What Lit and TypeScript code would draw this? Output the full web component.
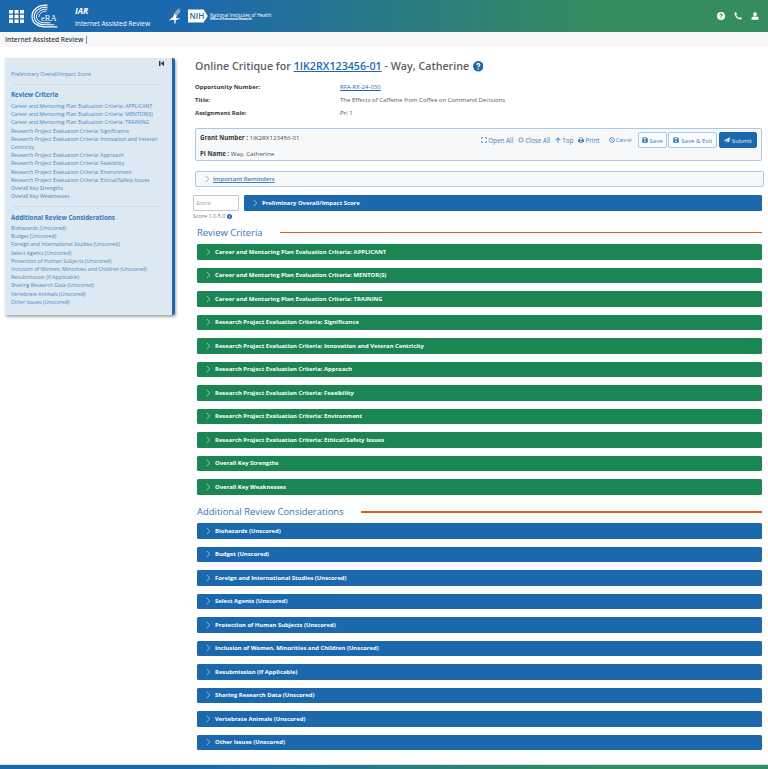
import { LitElement, html, css, svg } from 'lit';
import { customElement } from 'lit/decorators.js';

const CRITERIA = [
  'Career and Mentoring Plan Evaluation Criteria: APPLICANT',
  'Career and Mentoring Plan Evaluation Criteria: MENTOR(S)',
  'Career and Mentoring Plan Evaluation Criteria: TRAINING',
  'Research Project Evaluation Criteria: Significance',
  'Research Project Evaluation Criteria: Innovation and Veteran Centricity',
  'Research Project Evaluation Criteria: Approach',
  'Research Project Evaluation Criteria: Feasibility',
  'Research Project Evaluation Criteria: Environment',
  'Research Project Evaluation Criteria: Ethical/Safety Issues',
  'Overall Key Strengths',
  'Overall Key Weaknesses',
];

const CONSIDERATIONS = [
  'Biohazards (Unscored)',
  'Budget (Unscored)',
  'Foreign and International Studies (Unscored)',
  'Select Agents (Unscored)',
  'Protection of Human Subjects (Unscored)',
  'Inclusion of Women, Minorities and Children (Unscored)',
  'Resubmission (If Applicable)',
  'Sharing Research Data (Unscored)',
  'Vertebrate Animals (Unscored)',
  'Other Issues (Unscored)',
];

const chevron = html`<svg class="chev" viewBox="0 0 6 10"><path d="M1 .8 5 5 1 9.2" fill="none" stroke="currentColor" stroke-width=".7"/></svg>`;

const saveIcon = html`<svg class="ico" viewBox="0 0 16 16"><path fill="currentColor" fill-rule="evenodd" d="M2 1h10l3 3v10a1 1 0 0 1-1 1H2a1 1 0 0 1-1-1V2a1 1 0 0 1 1-1Zm1.500 2v3.500h8V3ZM8 8.500a2.500 2.500 0 1 0 0 5 2.500 2.500 0 0 0 0-5Z"/></svg>`;

const questionGlyph = svg`<path fill="currentColor" fill-rule="evenodd" d="M8 0a8 8 0 1 1 0 16A8 8 0 0 1 8 0Zm.2 3C6.300 3 5 4 4.800 5.700l2 .3c.1-.8.500-1.200 1.300-1.200.7 0 1.200.4 1.200 1 0 .5-.3.8-1 1.200-.9.500-1.300 1.100-1.300 2.200v.4h2V9.300c0-.4.200-.6.800-1 1-.6 1.500-1.300 1.500-2.400C11.300 4.200 10 3 8.200 3ZM7 11v2h2v-2Z"/>`;

@customElement('app-root')
export class AppRoot extends LitElement {
  static styles = css`
    :host {
      display: block;
      font-family: 'Open Sans', 'Noto Sans', sans-serif;
      color: #4a4f55;
      background: #fff;
    }
    * { box-sizing: border-box; }
    a { color: #1d69ad; }
    .page { height: 769px; display: flex; flex-direction: column; overflow: hidden; }

    .top {
      height: 32px;
      flex: none;
      display: flex;
      align-items: center;
      color: #fff;
      background: linear-gradient(90deg, #1c68ad 0%, #1c68ad 25%, #358c5e 78%, #358c5e 100%);
    }
    .grid-ico { width: 15px; height: 13px; margin-left: 9px; flex: none; }
    .era { width: 27px; height: 24px; margin-left: 7px; flex: none; }
    .app-name { margin-left: 17px; width: 77px; flex: none; display: flex; flex-direction: column; gap: 3px; padding-top: 1px; }
    .app-name b { font-size: 8.500px; font-style: italic; line-height: 10px; }
    .app-name span { font-size: 6.600px; line-height: 9px; white-space: nowrap; }
    .hhs { width: 13px; height: 16px; margin-left: 16px; flex: none; }
    .nih { width: 20px; height: 14px; margin-left: 7px; flex: none; }
    .nih-txt { margin-left: 2px; display: flex; flex-direction: column; gap: .5px; font-size: 4.700px; line-height: 5px; padding-top: 2px; }
    .nih-txt small { font-size: 2.800px; line-height: 3.500px; font-weight: 700; }
    .top-right { margin-left: auto; margin-right: 9.500px; display: flex; align-items: center; gap: 9px; }
    .top-right svg { width: 8px; height: 8px; display: block; }

    .sub {
      height: 15px;
      flex: none;
      background: #f6f7f9;
      display: flex;
      align-items: center;
      padding-left: 5px;
      font-size: 6.600px;
      font-weight: 600;
      color: #3c4045;
    }
    .sub i { width: .6px; height: 8px; background: #8a8a8a; margin-left: 3px; }

    .content { display: flex; align-items: flex-start; flex: 1; }

    .side {
      position: relative;
      margin: 11px 0 0 5px;
      width: 170px;
      flex: none;
      height: 257px;
      padding: 9px 4px 0 6px;
      background: #dce9f3;
      border-right: 3px solid #1c68ad;
      border-radius: 1px 2px 2px 1px;
      box-shadow: 1px 2px 3px rgba(0, 0, 0, .35);
      font-size: 5.230px;
      line-height: 8.200px;
      color: #4a88c0;
    }
    .side .pin { position: absolute; top: 3px; right: 8px; width: 5px; height: 5px; color: #333; }
    .side hr { border: 0; height: 1px; background: #d0dae3; margin: 6px 7px 5.200px 2px; }
    .side h4 { margin: 0 0 2.500px; font-size: 6.200px; line-height: 9px; font-weight: 700; color: #2f76b5; }

    .main { margin-left: 20px; width: 567px; flex: none; padding-top: 11px; }
    h1 {
      margin: 0;
      font-size: 10.700px;
      line-height: 17px;
      font-weight: 600;
      color: #5b6066;
      display: flex;
      align-items: center;
      white-space: pre;
    }
    h1 svg { width: 10.500px; height: 10.500px; color: #1c68ad; margin-left: 1px; }
    .meta {
      margin-top: 5.500px;
      display: grid;
      grid-template-columns: 145px 1fr;
      grid-auto-rows: 13px;
      align-items: center;
      font-size: 6px;
      color: #555;
    }
    .meta b { color: #33373b; font-weight: 700; }

    .grant {
      margin-top: 8.500px;
      height: 33px;
      border: 1px solid #a9c9e6;
      border-radius: 2px;
      background: #f6f8fa;
      display: flex;
      justify-content: space-between;
      padding: 3px 4px 0 4px;
      font-size: 6.150px;
    }
    .grant-info { display: flex; flex-direction: column; gap: 8px; line-height: 8px; padding-top: 1.500px; }
    .grant-info b { color: #33373b; }
    .tools { display: flex; align-items: center; height: 16px; color: #3f7fb9; font-size: 6.100px; }
    .tool { display: flex; align-items: center; gap: 1.500px; margin-right: 4.500px; white-space: nowrap; font-size: 6.350px; }
    .tool.cancel { font-size: 5px; margin-left: 4.500px; margin-right: 6px; }
    .ico { width: 6px; height: 6px; display: block; flex: none; }
    .btn {
      height: 16px;
      display: flex;
      align-items: center;
      gap: 2px;
      padding: 0 4px;
      margin-right: 1.500px;
      border: .7px solid #a9c9e6;
      border-radius: 2px;
      color: #3f7fb9;
      background: #f9fbfc;
      white-space: nowrap;
    }
    .btn.save { padding: 0 3px; }
    .btn .ico { color: #1c68ad; }
    .btn.primary { margin-right: 0; background: #1c68ad; border-color: #1c68ad; color: #e8f1f8; }
    .btn.primary .ico { color: #e8f1f8; }

    .reminders {
      margin-top: 10px;
      width: 569px;
      height: 16px;
      display: flex;
      align-items: center;
      padding-left: 8.500px;
      gap: 4px;
      border: 1px solid #a9c9e6;
      border-radius: 2px;
      background: #f6f8fa;
      font-size: 5.950px;
      font-weight: 600;
      color: #3f7fb9;
    }
    .reminders span { text-decoration: underline; }

    .score-row { margin-top: 8px; margin-left: -2px; display: flex; gap: 5px; align-items: flex-start; }
    .score-wrap { width: 46px; flex: none; }
    .score-input {
      height: 15.500px;
      border: .7px solid #c4c6c9;
      border-radius: 1px;
      padding-left: 2px;
      display: flex;
      align-items: center;
      font-size: 6.100px;
      font-style: italic;
      color: #999;
    }
    .score-hint { margin-top: 2px; display: flex; align-items: center; gap: 2px; font-size: 5.400px; line-height: 7px; color: #777; white-space: nowrap; }
    .score-hint svg { width: 5px; height: 5px; color: #1c68ad; }
    .score-row .bar { flex: 1; margin: 0; }

    .bar {
      height: 15.500px;
      margin: 0 0 8px 2px;
      display: flex;
      align-items: center;
      padding-left: 8.500px;
      gap: 5px;
      border-radius: 1.500px;
      color: #fff;
      font-size: 5.880px;
      font-weight: 700;
    }
    .chev { width: 4.500px; height: 8px; flex: none; display: block; }
    .blue { background: #1c68ad; }
    .green { background: #1c8554; }

    .section {
      margin: 0 0 5.500px 2px;
      height: 13px;
      display: flex;
      align-items: center;
      gap: 17px;
      font-size: 9.450px;
      font-weight: 500;
      color: #2f76b5;
      white-space: nowrap;
    }
    .section::after { content: ''; flex: 1; height: 1.500px; background: #d6601e; margin-top: 1px; }
    .section.first { margin-top: 6px; }
    .section.next { margin-top: 10.500px; margin-bottom: 5px; }

    .foot { height: 5px; flex: none; border-top: .7px solid #cfe0ee; background: linear-gradient(90deg, #1c68ad 0%, #1c68ad 25%, #358c5e 78%, #358c5e 100%); }
  `;

  render() {
    return html`
      <div class="page">
        <header class="top">
          <svg class="grid-ico" viewBox="0 0 15 13">
            <path fill="#fff" d="M0 0h4v3.500H0zM5.500 0h4v3.500h-4zM11 0h4v3.500h-4zM0 4.750h4v3.500H0zM5.500 4.750h4v3.500h-4zM11 4.750h4v3.500h-4zM0 9.500h4V13H0zM5.500 9.500h4V13h-4zM11 9.500h4V13h-4z"/>
          </svg>
          <svg class="era" viewBox="0 0 27 24">
            <g fill="none" stroke="#fff" stroke-linecap="round">
              <path stroke-width="1.200" d="M16 1.200C7 .8 1 6 1 12.500S6.500 22.800 14 22.800h12"/>
              <path stroke-width="1.100" d="M16 3.200C9 2.800 3.200 7 3.200 12.500S8.500 20.800 14 20.800h9"/>
              <path stroke-width="1" d="M16 5.200C11 4.800 5.500 8 5.500 12.500S10 18.800 14 18.800h5"/>
              <path stroke-width=".9" d="M15 7.200C11.500 7 8 9.500 8 12.500"/>
            </g>
            <text x="10" y="16.500" font-family="Liberation Serif, serif" font-size="8.500" fill="#fff">eRA</text>
          </svg>
          <div class="app-name"><b>IAR</b><span>Internet Assisted Review</span></div>
          <svg class="hhs" viewBox="0 0 14 17">
            <g fill="none" stroke="#fff" stroke-linecap="round">
              <path stroke-width=".8" d="M11.500 .8 7.500 5.500M12.500 1.800 8.500 6.500M13 3.300 9.500 7.500"/>
              <path stroke-width="1.200" d="M7 6.500 9 8.500"/>
            </g>
            <path fill="#fff" d="M6.500 6.500 9 9 8.800 11 13.500 10.800 9.800 12.500 8.500 12.800 8 16.500 6.800 16.500 6.800 13 4.500 12.500 1 13.500 3.500 11 5.500 9.500Z"/>
          </svg>
          <svg class="nih" viewBox="0 0 20 14">
            <path fill="#fff" d="M0 .5h15.500L19.800 7l-4.300 6.500H0Z"/>
            <text x="1.500" y="10" font-family="Open Sans, sans-serif" font-size="8" font-weight="600" fill="#1c68ad">NIH</text>
          </svg>
          <div class="nih-txt"><span>National Institutes of Health</span><small>Office of Extramural Research</small></div>
          <div class="top-right">
            <svg viewBox="0 0 16 16">${questionGlyph}</svg>
            <svg viewBox="0 0 16 16"><path fill="#fff" d="M3.700.4 1 1.500C.5 8.500 7 15.500 14.500 15l1.100-2.800-3.700-2.200-1.700 2C8 11 5.200 8.200 4.300 6.300l2-1.700Z"/></svg>
            <svg viewBox="0 0 16 16"><path fill="#fff" d="M8 .5a3.800 3.800 0 1 1 0 7.600A3.800 3.800 0 0 1 8 .5ZM1 15.500v-2.700C1 10.500 3 9 5 9h6c2 0 4 1.500 4 3.800v2.700Z"/></svg>
          </div>
        </header>
        <div class="sub">Internet Assisted Review<i></i></div>

        <div class="content">
          <aside class="side">
            <svg class="pin" viewBox="0 0 10 10"><path fill="currentColor" d="M0 0h3v10H0zM10 0v10L3.500 5z"/></svg>
            <div style="margin-top:3px">Preliminary Overall/Impact Score</div>
            <hr />
            <h4>Review Criteria</h4>
            ${CRITERIA.map((c) => html`<div>${c}</div>`)}
            <hr />
            <h4>Additional Review Considerations</h4>
            ${CONSIDERATIONS.map((c) => html`<div>${c}</div>`)}
          </aside>

          <main class="main">
            <h1>Online Critique for <a href="#">1IK2RX123456-01</a> - Way, Catherine <svg viewBox="0 0 16 16">${questionGlyph}</svg></h1>
            <div class="meta">
              <b>Opportunity Number:</b><a href="#">RFA-RX-24-030</a>
              <b>Title:</b><span>The Effects of Caffeine from Coffee on Command Decisions</span>
              <b>Assignment Role:</b><span>Pri 1</span>
            </div>

            <section class="grant">
              <div class="grant-info">
                <div><b>Grant Number :</b> 1IK2RX123456-01</div>
                <div><b>PI Name :</b> Way, Catherine</div>
              </div>
              <div class="tools">
                <div class="tool"><svg class="ico" viewBox="0 0 16 16"><path fill="none" stroke="currentColor" stroke-width="2" d="M1.500 5.500v-4h4M10.500 1.500h4v4M14.500 10.500v4h-4M5.500 14.500h-4v-4"/></svg>Open All</div>
                <div class="tool"><svg class="ico" viewBox="0 0 16 16"><path fill="none" stroke="currentColor" stroke-width="2" d="M1 5.500h4.500V1M10.500 1v4.500H15M15 10.500h-4.500V15M5.500 15v-4.500H1"/></svg>Close All</div>
                <div class="tool"><svg class="ico" viewBox="0 0 16 16"><path fill="currentColor" d="M8 1 15 8l-1.500 1.500L9.200 5.300V15H6.800V5.300L2.500 9.500 1 8Z"/></svg>Top</div>
                <div class="tool"><svg class="ico" viewBox="0 0 16 16"><path fill="currentColor" fill-rule="evenodd" d="M3 1h8l2 2v3h1.500A1.500 1.500 0 0 1 16 7.500V13h-3v2H3v-2H0V7.500A1.500 1.500 0 0 1 1.500 6H3Zm1.500 1.500V7h7V4h-2V2.500ZM4.500 11v2.500h7V11Z"/></svg>Print</div>
                <div class="tool cancel"><svg class="ico" viewBox="0 0 16 16"><circle cx="8" cy="8" r="6.500" fill="none" stroke="currentColor" stroke-width="2"/><path stroke="currentColor" stroke-width="2" d="M3.500 3.500l9 9"/></svg>Cancel</div>
                <div class="btn save">${saveIcon}Save</div>
                <div class="btn">${saveIcon}Save &amp; Exit</div>
                <div class="btn primary"><svg class="ico" viewBox="0 0 16 16"><path fill="currentColor" d="M16 0 13.500 14 8.500 12l-2.500 4v-3.500L13 4 4.500 11 0 9Z"/></svg>Submit</div>
              </div>
            </section>

            <div class="reminders">${chevron}<span>Important Reminders</span></div>

            <div class="score-row">
              <div class="score-wrap">
                <div class="score-input">Score</div>
                <div class="score-hint">Score 1.0-5.0 <svg viewBox="0 0 16 16"><path fill="currentColor" fill-rule="evenodd" d="M8 0a8 8 0 1 1 0 16A8 8 0 0 1 8 0ZM7 3v2.500h2V3Zm-1 4v1.500h1v3H6V13h4v-1.500H9V7Z"/></svg></div>
              </div>
              <div class="bar blue">${chevron}Preliminary Overall/Impact Score</div>
            </div>

            <div class="section first">Review Criteria</div>
            ${CRITERIA.map((c) => html`<div class="bar green">${chevron}${c}</div>`)}

            <div class="section next">Additional Review Considerations</div>
            ${CONSIDERATIONS.map((c) => html`<div class="bar blue">${chevron}${c}</div>`)}
          </main>
        </div>
        <footer class="foot"></footer>
      </div>
    `;
  }
}
